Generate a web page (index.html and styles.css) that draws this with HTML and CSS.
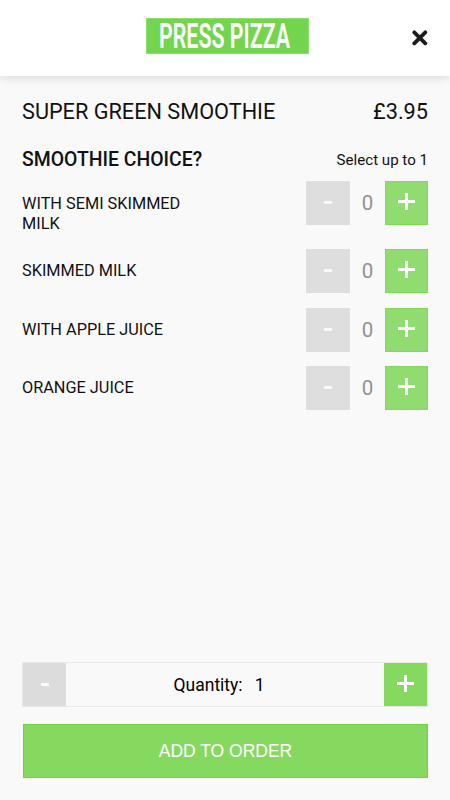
FILE: index.html
```
<!DOCTYPE html>
<html lang="en">
<head>
<meta charset="utf-8">
<title>Press Pizza</title>
<link rel="stylesheet" href="styles.css">
</head>
<body>
<header class="header">
  <div class="logo">
    <svg width="163" height="36" viewBox="0 0 163 36"><text class="logo-text" x="13" y="30" textLength="131" lengthAdjust="spacingAndGlyphs">PRESS PIZZA</text></svg>
  </div>
  <button class="close" aria-label="Close"><svg width="16" height="16" viewBox="0 0 16 16"><path d="M2.3 2.3 13.3 13.3M13.3 2.3 2.3 13.3"/></svg></button>
</header>
<main class="content">
  <div class="line product"><span class="name">SUPER GREEN SMOOTHIE</span><span class="price">£3.95</span></div>
  <div class="line choice"><h2>SMOOTHIE CHOICE?</h2><span class="hint">Select up to 1</span></div>
  <ul class="options">
    <li class="tall"><span class="label">WITH SEMI SKIMMED MILK</span><div class="stepper"><button class="step minus"><i></i></button><span class="count">0</span><button class="step plus"><i></i></button></div></li>
    <li><span class="label">SKIMMED MILK</span><div class="stepper"><button class="step minus"><i></i></button><span class="count">0</span><button class="step plus"><i></i></button></div></li>
    <li><span class="label">WITH APPLE JUICE</span><div class="stepper"><button class="step minus"><i></i></button><span class="count">0</span><button class="step plus"><i></i></button></div></li>
    <li><span class="label">ORANGE JUICE</span><div class="stepper"><button class="step minus"><i></i></button><span class="count">0</span><button class="step plus"><i></i></button></div></li>
  </ul>
</main>
<footer class="footer">
  <div class="quantity"><button class="step minus"><i></i></button><div class="amount"><span>Quantity:</span><span>1</span></div><button class="step plus"><i></i></button></div>
  <button class="add">ADD TO ORDER</button>
</footer>
</body>
</html>
```
FILE: styles.css
```
* { box-sizing: border-box; }
body {
  margin: 0;
  height: 800px;
  display: flex;
  flex-direction: column;
  background: #f9f9f9;
  color: #111;
  font-family: Roboto, sans-serif;
}
button { border: 0; padding: 0; margin: 0; background: none; }
.header {
  height: 76px;
  flex: none;
  display: grid;
  grid-template-columns: 146px 163px 1fr;
  background: #fff;
  box-shadow: 0 1px 10px rgba(0, 0, 0, .15);
}
.logo {
  grid-column: 2;
  height: 36px;
  margin-top: 18px;
  background: #72d54d;
  border: 1px solid #8bdf6b;
}
.logo svg { display: block; margin: -1px; overflow: visible; }
.logo-text { font: 600 35px Roboto, sans-serif; fill: #fff; }
.close { justify-self: end; width: 16px; height: 16px; margin: 30px 22px 0 0; }
.close svg { display: block; }
.close path { stroke: #1c1c1c; stroke-width: 3.8; stroke-linecap: round; }
.content { flex: 1; padding: 21px 22px 0; }
.line { display: flex; justify-content: space-between; align-items: center; }
.product { height: 28px; font-size: 21.7px; }
.choice { height: 28px; margin-top: 20px; }
h2 { margin: 0; font-size: 19.4px; font-weight: 500; }
.hint { font-size: 15.1px; padding-top: 1px; }
.options { list-style: none; margin: 8px 0 0; padding: 0; }
.options li { display: flex; justify-content: space-between; align-items: center; height: 44px; margin-bottom: 14.6px; }
.options .tall { align-items: flex-start; height: 53px; margin-bottom: 15px; }
.label { width: 190px; font-size: 16.3px; line-height: 20px; }
.tall .label { padding-top: 12.5px; }
.stepper { display: flex; align-items: center; }
.step { width: 44px; height: 44px; flex: none; display: flex; justify-content: center; }
.minus { background: #dedede; }
.plus { width: 43px; background: #90dc70; border: 1px solid #7ddb54; }
.minus i { width: 8px; height: 3px; margin-top: 20px; background: #fafafa; }
.plus i {
  width: 17px;
  height: 17px;
  margin: 11px 1px 0 0;
  background: linear-gradient(#fff, #fff) center / 17px 3px no-repeat, linear-gradient(#fff, #fff) center / 3px 17px no-repeat;
}
.count { width: 35px; text-align: center; font-size: 20.5px; color: #929292; }
.footer { height: 138px; padding: 0 22px; }
.quantity { display: flex; height: 45px; border: 1px solid #e8e8e8; }
.quantity .step { width: 43px; height: 43px; }
.quantity .minus { background: #dcdcdc; }
.quantity .plus { background: #86d95f; border: 0; }
.quantity .plus i { margin-top: 12px; }
.amount { flex: 1; display: flex; gap: 12px; justify-content: center; align-items: center; padding: 1px 12px 0 0; font-size: 17.5px; color: #000; }
.add {
  display: block;
  width: 405px;
  height: 54px;
  margin: 17px 0 0 1px;
  background: #86d95f;
  border: 1px solid #6dd43e;
  color: #fff;
  font: 17.5px "Liberation Sans", sans-serif;
}
```
